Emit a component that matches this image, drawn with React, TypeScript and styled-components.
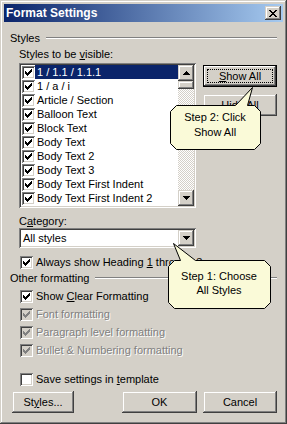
import React from 'react';
import styled, { createGlobalStyle, css } from 'styled-components';

const FACE = '#d4d0c8';
const SHADOW = '#808080';
const DARK = '#404040';
const HILITE = '#ffffff';
const SELECT = '#0a246a';
const NOTE = '#fafad8';

const raised = css`
  box-shadow: inset -1px -1px ${DARK}, inset 1px 1px ${FACE}, inset -2px -2px ${SHADOW},
    inset 2px 2px ${HILITE};
`;

const sunken = css`
  box-shadow: inset 1px 1px ${SHADOW}, inset -1px -1px ${HILITE}, inset 2px 2px ${DARK},
    inset -2px -2px ${FACE};
`;

const GlobalStyle = createGlobalStyle`
  html, body {
    margin: 0;
    padding: 0;
    background: ${FACE};
  }
  body {
    font-family: 'Liberation Sans', Arial, sans-serif;
    font-size: 11px;
    color: #000;
  }
  * {
    box-sizing: border-box;
  }
`;

const Dialog = styled.div`
  position: relative;
  width: 287px;
  height: 424px;
  padding: 4px;
  background: ${FACE};
  display: flex;
  flex-direction: column;
  ${raised};
`;

const TitleBar = styled.div`
  height: 18px;
  display: flex;
  align-items: center;
  justify-content: space-between;
  padding: 0 2px 0 2px;
  background: linear-gradient(to right, #0a246a, #a6caf0);
  color: #fff;
  font-weight: bold;
  font-size: 12px;
`;

const CloseButton = styled.div`
  width: 16px;
  height: 14px;
  background: ${FACE};
  display: flex;
  align-items: center;
  justify-content: center;
  ${raised};
`;

const Body = styled.div`
  display: flex;
  flex-direction: column;
  padding: 9px 6px 0 6px;
`;

const GroupHeader = styled.div<{ $mt?: number }>`
  height: 14px;
  margin-top: ${({ $mt }) => $mt ?? 0}px;
  display: flex;
  align-items: center;
  gap: 6px;
`;

const Etched = styled.div`
  flex: 1;
  height: 2px;
  border-top: 1px solid ${SHADOW};
  border-bottom: 1px solid ${HILITE};
`;

const GroupBody = styled.div`
  display: flex;
  flex-direction: column;
  padding-left: 9px;
`;

const FieldLabel = styled.div<{ $mt: number }>`
  height: 13px;
  line-height: 13px;
  margin-top: ${({ $mt }) => $mt}px;
`;

const Key = styled.span`
  text-decoration: underline;
`;

const ListRow = styled.div`
  display: flex;
  gap: 7px;
  margin-top: 2px;
`;

const ListBox = styled.div`
  width: 177px;
  height: 145px;
  padding: 2px;
  background: #fff;
  display: flex;
  ${sunken};
`;

const Items = styled.div`
  flex: 1;
  display: flex;
  flex-direction: column;
`;

const Item = styled.div`
  height: 14px;
  display: flex;
  align-items: center;
  padding-left: 1px;
  white-space: nowrap;
`;

const ItemText = styled.span<{ $selected?: boolean }>`
  flex: 1;
  height: 14px;
  line-height: 14px;
  padding-left: 2px;
  background: ${({ $selected }) => ($selected ? SELECT : 'transparent')};
  color: ${({ $selected }) => ($selected ? '#fff' : '#000')};
`;

const ScrollBar = styled.div`
  width: 16px;
  display: flex;
  flex-direction: column;
  background-color: #fff;
  background-image: conic-gradient(${FACE} 25%, #fff 0 50%, ${FACE} 0 75%, #fff 0);
  background-size: 2px 2px;
`;

const ArrowButton = styled.div`
  width: 16px;
  height: 16px;
  flex: none;
  background: ${FACE};
  display: flex;
  align-items: center;
  justify-content: center;
  ${raised};
`;

const Thumb = styled.div`
  height: 8px;
  background: ${FACE};
  ${raised};
`;

const Track = styled.div`
  flex: 1;
`;

const SideButtons = styled.div`
  display: flex;
  flex-direction: column;
  gap: 7px;
  margin-top: 2px;
`;

const Button = styled.button<{ $width: number; $default?: boolean }>`
  position: relative;
  width: ${({ $width }) => $width}px;
  height: 22px;
  padding: 0;
  border: none;
  background: ${FACE};
  font: inherit;
  color: #000;
  ${raised};
  ${({ $default }) =>
    $default &&
    css`
      box-shadow: inset 0 0 0 1px #000, inset -2px -2px ${DARK}, inset 2px 2px ${HILITE},
        inset -3px -3px ${SHADOW}, inset 3px 3px ${FACE};
      &::after {
        content: '';
        position: absolute;
        inset: 4px;
        border: 1px dotted #000;
      }
    `}
`;

const Combo = styled.div`
  width: 177px;
  height: 20px;
  padding: 2px;
  background: #fff;
  display: flex;
  align-items: center;
  justify-content: space-between;
  ${sunken};
`;

const ComboText = styled.span`
  padding-left: 2px;
`;

const CheckRow = styled.div<{ $mt?: number; $disabled?: boolean }>`
  height: 18px;
  margin-top: ${({ $mt }) => $mt ?? 0}px;
  display: flex;
  align-items: center;
  gap: 3px;
  padding-left: 10px;
  white-space: nowrap;
  color: ${({ $disabled }) => ($disabled ? SHADOW : '#000')};
  text-shadow: ${({ $disabled }) => ($disabled ? '1px 1px 0 #fff' : 'none')};
`;

const Box = styled.div<{ $disabled?: boolean }>`
  width: 13px;
  height: 13px;
  flex: none;
  background: ${({ $disabled }) => ($disabled ? FACE : '#fff')};
  ${sunken};
`;

const ButtonRow = styled.div`
  display: flex;
  gap: 6px;
  margin-top: 3px;
  padding-left: 2px;
`;

const Spacer = styled.div`
  flex: 1;
`;

const Callout = styled.div<{ $x: number; $y: number; $w: number; $h: number }>`
  position: absolute;
  left: ${({ $x }) => $x}px;
  top: ${({ $y }) => $y}px;
  width: ${({ $w }) => $w}px;
  height: ${({ $h }) => $h}px;
`;

const CalloutShape = styled.svg`
  position: absolute;
  inset: 0;
`;

const CalloutText = styled.div<{ $x: number; $y: number; $w: number; $lh: number }>`
  position: absolute;
  left: ${({ $x }) => $x}px;
  top: ${({ $y }) => $y}px;
  width: ${({ $w }) => $w}px;
  line-height: ${({ $lh }) => $lh}px;
  font-family: 'Liberation Sans', Arial, sans-serif;
  font-size: 11px;
  text-align: center;
`;

const CheckMark = ({ color }: { color: string }) => (
  <svg width="13" height="13" viewBox="0 0 13 13" shapeRendering="crispEdges">
    <path
      fill={color}
      d="M9 3h1v1H9z M8 4h2v1H8z M3 5h1v1H3z M7 5h3v1H7z M3 6h2v1H3z M6 6h3v1H6z M3 7h5v1H3z M4 8h3v1H4z M5 9h1v1H5z"
    />
  </svg>
);

const Check = ({ checked = true, disabled }: { checked?: boolean; disabled?: boolean }) => (
  <Box $disabled={disabled}>{checked && <CheckMark color={disabled ? SHADOW : '#000'} />}</Box>
);

const Arrow = ({ down }: { down?: boolean }) => (
  <svg width="7" height="4" viewBox="0 0 7 4" shapeRendering="crispEdges">
    <path
      fill="#000"
      transform={down ? 'rotate(180 3.5 2)' : undefined}
      d="M3 0h1v1H3z M2 1h3v1H2z M1 2h5v1H1z M0 3h7v1H0z"
    />
  </svg>
);

const CloseGlyph = () => (
  <svg width="8" height="7" viewBox="0 0 8 7" shapeRendering="crispEdges">
    <path
      fill="#000"
      d="M0 0h2v1H0z M6 0h2v1H6z M1 1h2v1H1z M5 1h2v1H5z M2 2h4v1H2z M3 3h2v1H3z M2 4h4v1H2z M1 5h2v1H1z M5 5h2v1H5z M0 6h2v1H0z M6 6h2v1H6z"
    />
  </svg>
);

const styleNames = [
  '1 / 1.1 / 1.1.1',
  '1 / a / i',
  'Article / Section',
  'Balloon Text',
  'Block Text',
  'Body Text',
  'Body Text 2',
  'Body Text 3',
  'Body Text First Indent',
  'Body Text First Indent 2',
];

export default function App() {
  return (
    <>
      <GlobalStyle />
      <Dialog>
        <TitleBar>
          <span>Format Settings</span>
          <CloseButton>
            <CloseGlyph />
          </CloseButton>
        </TitleBar>
        <Body>
          <GroupHeader>
            <span>Styles</span>
            <Etched />
          </GroupHeader>
          <GroupBody>
            <FieldLabel $mt={3}>
              Styles to be <Key>v</Key>isible:
            </FieldLabel>
            <ListRow>
              <ListBox>
                <Items>
                  {styleNames.map((name, i) => (
                    <Item key={name}>
                      <Check />
                      <ItemText $selected={i === 0}>{name}</ItemText>
                    </Item>
                  ))}
                </Items>
                <ScrollBar>
                  <ArrowButton>
                    <Arrow />
                  </ArrowButton>
                  <Thumb />
                  <Track />
                  <ArrowButton>
                    <Arrow down />
                  </ArrowButton>
                </ScrollBar>
              </ListBox>
              <SideButtons>
                <Button $width={74} $default>
                  <Key>S</Key>how All
                </Button>
                <Button $width={74}>
                  <Key>H</Key>ide All
                </Button>
              </SideButtons>
            </ListRow>
            <FieldLabel $mt={7}>
              C<Key>a</Key>tegory:
            </FieldLabel>
            <Combo>
              <ComboText>All styles</ComboText>
              <ArrowButton>
                <Arrow down />
              </ArrowButton>
            </Combo>
          </GroupBody>
          <CheckRow $mt={5}>
            <Check />
            <span>
              Always show Heading <Key>1</Key> through 3
            </span>
          </CheckRow>
          <GroupHeader>
            <span>Other formatting</span>
            <Etched />
          </GroupHeader>
          <CheckRow $mt={2}>
            <Check />
            <span>
              Show <Key>C</Key>lear Formatting
            </span>
          </CheckRow>
          <CheckRow $disabled>
            <Check disabled />
            <span>Font formatting</span>
          </CheckRow>
          <CheckRow $disabled>
            <Check disabled />
            <span>Paragraph level formatting</span>
          </CheckRow>
          <CheckRow $disabled>
            <Check disabled />
            <span>Bullet &amp; Numbering formatting</span>
          </CheckRow>
          <CheckRow $mt={11}>
            <Check checked={false} />
            <span>
              Save settings in <Key>t</Key>emplate
            </span>
          </CheckRow>
          <ButtonRow>
            <Button $width={62}>
              St<Key>y</Key>les...
            </Button>
            <Spacer />
            <Button $width={75}>OK</Button>
            <Button $width={74}>Cancel</Button>
          </ButtonRow>
        </Body>

        <Callout $x={168} $y={85} $w={95} $h={66}>
          <CalloutShape width="95" height="66" viewBox="0 0 95 66">
            <polygon
              fill={NOTE}
              stroke="#000"
              strokeWidth="1"
              points="8.5,20.5 67.5,20.5 84.5,2.5 79.5,20.5 86.5,20.5 92.5,26.5 92.5,58.5 86.5,64.5 8.5,64.5 2.5,58.5 2.5,26.5"
            />
          </CalloutShape>
          <CalloutText $x={2} $y={25} $w={90} $lh={15}>
            Step 2: Click
            <br />
            Show All
          </CalloutText>
        </Callout>

        <Callout $x={166} $y={241} $w={106} $h={69}>
          <CalloutShape width="106" height="69" viewBox="0 0 106 69">
            <polygon
              fill={NOTE}
              stroke="#000"
              strokeWidth="1"
              points="8.5,19.5 14.5,19.5 7.5,2.5 29.5,19.5 98.5,19.5 104.5,25.5 104.5,61.5 98.5,67.5 8.5,67.5 2.5,61.5 2.5,25.5"
            />
          </CalloutShape>
          <CalloutText $x={2} $y={28} $w={102} $lh={14}>
            Step 1: Choose
            <br />
            All Styles
          </CalloutText>
        </Callout>
      </Dialog>
    </>
  );
}
